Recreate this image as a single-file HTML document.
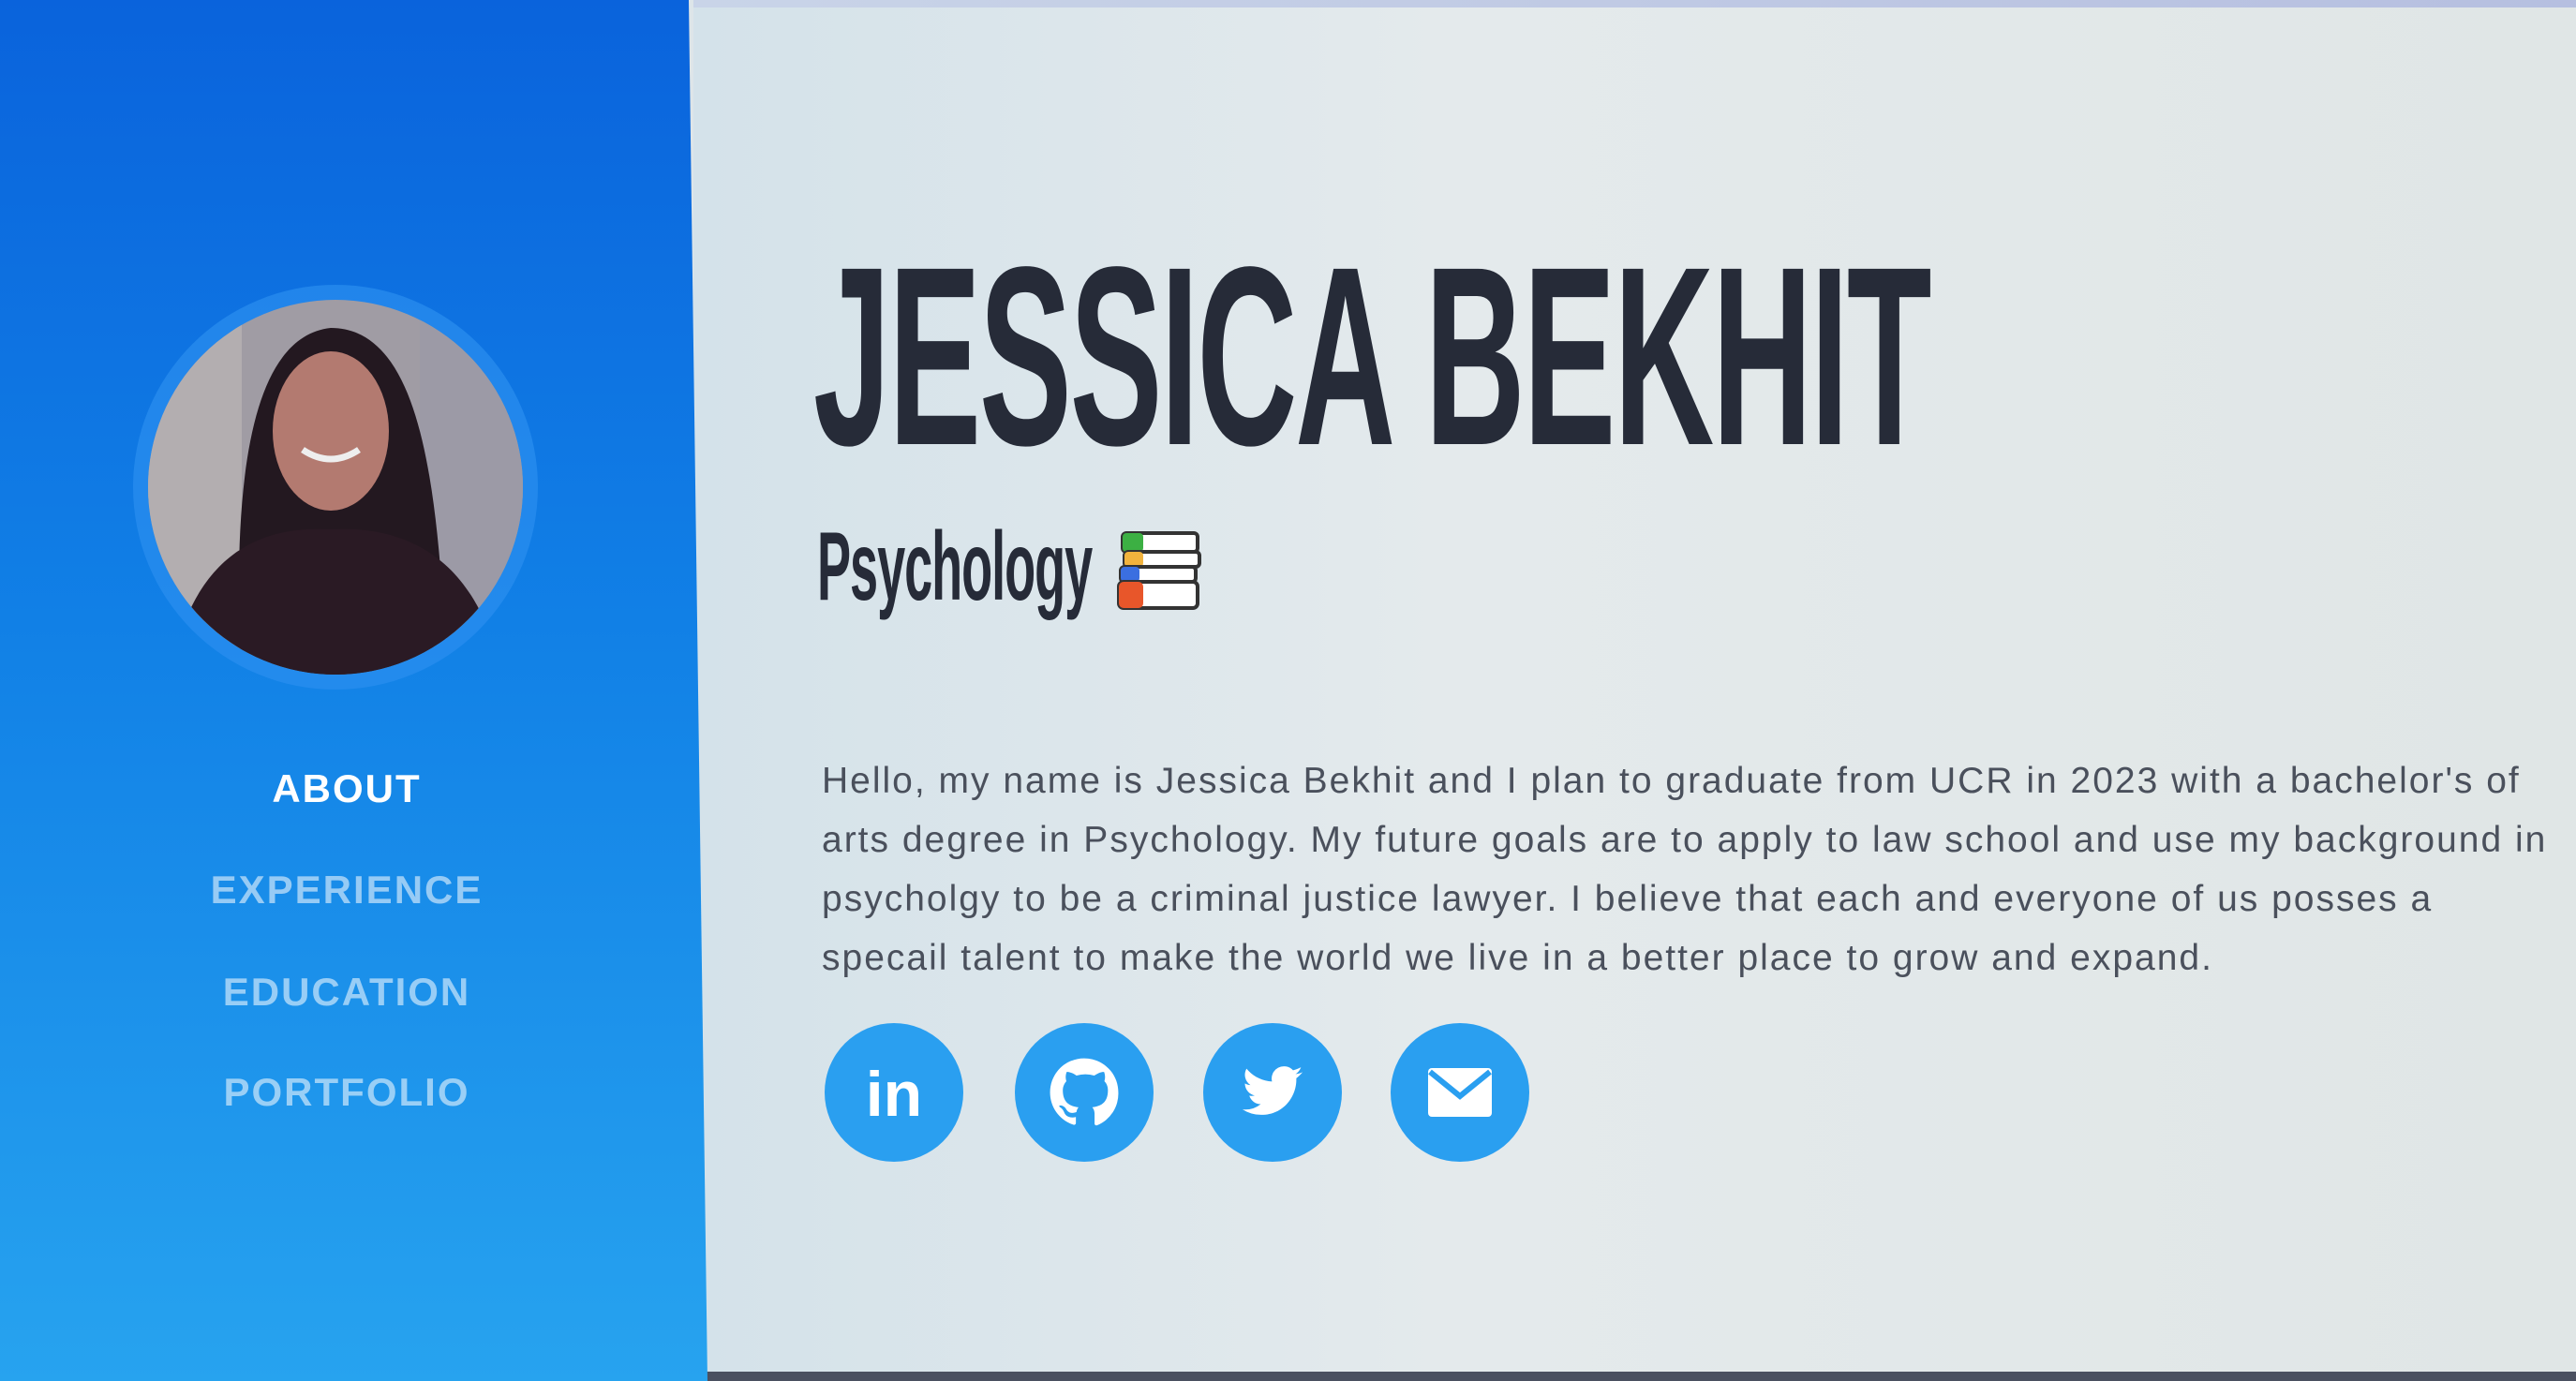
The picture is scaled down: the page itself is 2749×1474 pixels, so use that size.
<!DOCTYPE html>
<html><head><meta charset="utf-8"><style>
html,body{margin:0;padding:0;width:2749px;height:1474px;overflow:hidden;background:#dde5e9;font-family:"Liberation Sans",sans-serif}
#side{position:absolute;left:0;top:0;width:760px;height:1474px;background:linear-gradient(180deg,#0a63dc 0%,#1180e6 45%,#27a3ef 100%);clip-path:polygon(0 0,735px 0,755px 1474px,0 1474px)}
#main{position:absolute;left:740px;top:0;right:0;bottom:0;background:linear-gradient(90deg,#d4e2ea 0%,#e4eaec 40%,#e0e6e6 100%)}
.nav{position:absolute;width:740px;text-align:center;font-weight:bold;font-size:42px;letter-spacing:2px;color:rgba(255,255,255,.55)}
h1{position:absolute;left:868px;top:244px;margin:0;font-family:"Liberation Sans",sans-serif;font-weight:bold;font-size:272px;line-height:1;color:#262b38;transform:scaleX(.545);transform-origin:0 0;white-space:nowrap;letter-spacing:-4px}
h2{position:absolute;left:872px;top:553px;margin:0;font-family:"Liberation Sans",sans-serif;font-weight:bold;font-size:104px;line-height:1;color:#262b38;transform:scaleX(.52);transform-origin:0 0;white-space:nowrap;letter-spacing:-2px}
p{position:absolute;left:877px;top:802px;margin:0;font-size:39px;line-height:63px;color:#4a505c;letter-spacing:2px;white-space:nowrap}
.ic{position:absolute;width:148px;height:148px;border-radius:50%;background:#2a9ff0;top:1092px;display:flex;align-items:center;justify-content:center;color:#fff}
</style></head><body>
<div id="main"></div>
<div style="position:absolute;left:740px;right:0;top:0;height:8px;background:linear-gradient(90deg,#c9d4e8,#b6bfe0)"></div>
<div style="position:absolute;left:740px;right:0;bottom:0;height:10px;background:#4a5060"></div>
<div id="side"></div>
<svg style="position:absolute;left:138px;top:300px" width="440" height="440" viewBox="0 0 440 440">
<defs><clipPath id="c"><circle cx="220" cy="220" r="200"/></clipPath></defs>
<circle cx="220" cy="220" r="216" fill="#2b8ef0" opacity=".7"/>
<g clip-path="url(#c)">
<rect width="440" height="440" fill="#a09ca4"/>
<rect x="0" y="0" width="120" height="440" fill="#b3aeb0"/>
<rect x="310" y="0" width="130" height="440" fill="#9c9aa6"/>
<path d="M120 430 C110 250 120 60 215 50 C320 50 330 250 340 430Z" fill="#231820"/>
<ellipse cx="215" cy="160" rx="62" ry="85" fill="#b37a70"/>
<path d="M185 180 Q215 200 245 180" stroke="#eee" stroke-width="7" fill="none"/>
<path d="M40 440 C60 300 130 260 215 265 C300 260 380 300 400 440Z" fill="#2a1a24"/>
</g></svg>
<div class="nav" style="top:818px;color:#fff">ABOUT</div>
<div class="nav" style="top:926px">EXPERIENCE</div>
<div class="nav" style="top:1035px">EDUCATION</div>
<div class="nav" style="top:1142px">PORTFOLIO</div>
<h1>JESSICA BEKHIT</h1>
<h2>Psychology</h2>
<svg style="position:absolute;left:1192px;top:565px" width="90" height="88" viewBox="0 0 90 88">
<rect x="6" y="4" width="80" height="20" rx="4" fill="#fff" stroke="#333" stroke-width="4"/><rect x="6" y="4" width="22" height="20" rx="4" fill="#3cb043"/>
<rect x="8" y="24" width="80" height="16" rx="4" fill="#fff" stroke="#333" stroke-width="4"/><rect x="8" y="24" width="20" height="16" rx="4" fill="#f2b33d"/>
<rect x="4" y="40" width="80" height="16" rx="4" fill="#fff" stroke="#333" stroke-width="4"/><rect x="4" y="40" width="20" height="16" rx="4" fill="#3b6fe0"/>
<rect x="2" y="56" width="84" height="28" rx="5" fill="#fff" stroke="#333" stroke-width="4"/><rect x="2" y="56" width="26" height="28" rx="5" fill="#e8562a"/>
</svg>
<p>Hello, my name is Jessica Bekhit and I plan to graduate from UCR in 2023 with a bachelor's of<br>arts degree in Psychology. My future goals are to apply to law school and use my background in<br>psycholgy to be a criminal justice lawyer. I believe that each and everyone of us posses a<br>specail talent to make the world we live in a better place to grow and expand.</p>
<div class="ic" style="left:880px"><span style="font-weight:bold;font-size:68px;margin-top:4px">in</span></div>
<div class="ic" style="left:1083px"><svg width="76" height="76" viewBox="0 0 24 24"><path fill="#fff" d="M12 .5C5.6.5.5 5.6.5 12c0 5.1 3.3 9.4 7.9 10.9.6.1.8-.3.8-.6v-2c-3.200.7-3.900-1.500-3.900-1.500-.5-1.300-1.300-1.700-1.300-1.700-1-.7.1-.7.1-.7 1.200.1 1.800 1.200 1.800 1.200 1 1.800 2.800 1.300 3.500 1 .1-.8.4-1.300.7-1.600-2.600-.3-5.300-1.300-5.300-5.700 0-1.300.5-2.300 1.200-3.100-.1-.3-.5-1.500.1-3.100 0 0 1-.3 3.300 1.200a11 11 0 0 1 6 0c2.300-1.500 3.300-1.200 3.300-1.200.6 1.600.2 2.800.1 3.100.8.8 1.200 1.800 1.200 3.100 0 4.400-2.700 5.400-5.300 5.700.4.4.8 1.100.8 2.200v3.300c0 .3.2.7.8.6A11.5 11.5 0 0 0 23.5 12C23.5 5.6 18.4.5 12 .5z"/></svg></div>
<div class="ic" style="left:1284px"><svg width="70" height="70" viewBox="0 0 24 24"><path fill="#fff" d="M23 4.6c-.8.4-1.7.6-2.6.7.9-.6 1.6-1.4 2-2.5-.9.5-1.9.9-2.9 1.1a4.5 4.5 0 0 0-7.7 4.1C8 7.8 4.7 6 2.5 3.3a4.5 4.5 0 0 0 1.4 6c-.7 0-1.4-.2-2-.6 0 2.2 1.6 4 3.600 4.400-.7.2-1.400.2-2 .1.6 1.800 2.200 3.100 4.200 3.100A9 9 0 0 1 1 18.200 12.800 12.800 0 0 0 7.900 20.200c8.300 0 12.800-6.900 12.800-12.800v-.6c.9-.6 1.600-1.400 2.300-2.200z"/></svg></div>
<div class="ic" style="left:1484px"><svg width="72" height="56" viewBox="0 0 36 28"><rect x="1" y="1" width="34" height="26" rx="2" fill="#fff"/><path d="M2 3 L18 16 L34 3" stroke="#2a9ff0" stroke-width="3" fill="none"/></svg></div>
</body></html>
